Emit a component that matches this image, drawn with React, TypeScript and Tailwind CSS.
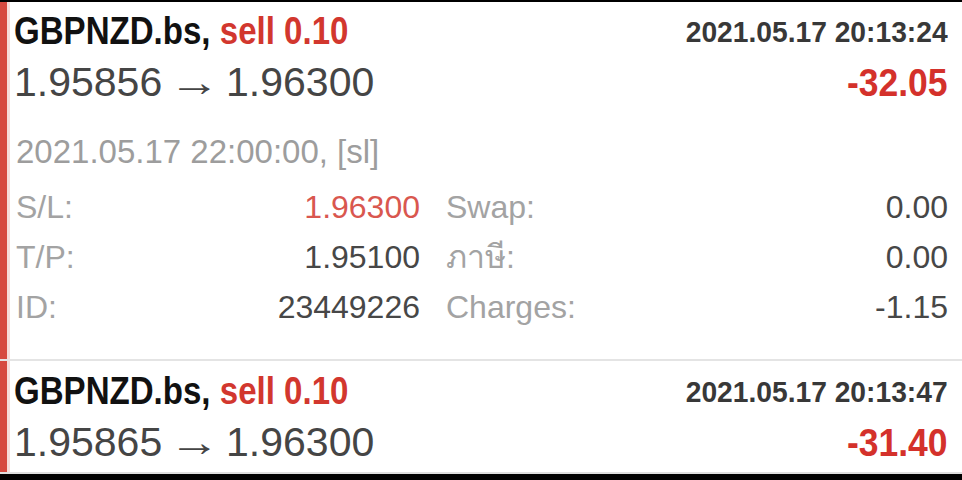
import React from 'react';

interface Deal {
  symbol: string;
  side: string;
  time: string;
  open: string;
  close: string;
  profit: string;
}

// no narrow font installed, so the condensed bold is Liberation Sans squeezed on x
const bold = "font-['Liberation_Sans','Arial',sans-serif] font-bold inline-block";
const regular = "font-['Liberation_Sans','Noto_Sans','DejaVu_Sans',sans-serif]";

function DealHeader({ deal }: { deal: Deal }) {
  return (
    <>
      {/* symbol + side, open time */}
      <div className="h-[52px] flex items-center justify-between">
        <div className={`${bold} text-[38px] scale-x-[0.87] origin-left whitespace-nowrap`}>
          <span className="text-[#111]">{deal.symbol}, </span>
          <span className="text-[#d2372e]">{deal.side}</span>
        </div>
        <div className={`${bold} text-[30px] scale-x-[0.94] origin-right text-[#383838] whitespace-nowrap`}>{deal.time}</div>
      </div>
      {/* prices + profit */}
      <div className="h-[52px] flex items-center justify-between">
        <div className={`${regular} text-[41px] text-[#454545] whitespace-nowrap`}>
          {deal.open} <span className="inline-block scale-x-[1.25]">→</span> {deal.close}
        </div>
        <div className={`${bold} text-[39px] scale-x-[0.91] origin-right text-[#d4312b]`}>{deal.profit}</div>
      </div>
    </>
  );
}

function DetailRow({ label, value, label2, value2, valueClass = 'text-[#474747]' }: {
  label: string;
  value: string;
  label2: string;
  value2: string;
  valueClass?: string;
}) {
  return (
    <div className={`${regular} h-[50px] flex items-center text-[32px]`}>
      <div className="w-[406px] flex justify-between pl-[2px]">
        <span className="text-[#a3a3a3]">{label}</span>
        <span className={valueClass}>{value}</span>
      </div>
      <div className="flex-1 ml-[26px] flex justify-between">
        <span className="text-[#a3a3a3]">{label2}</span>
        <span className="text-[#474747]">{value2}</span>
      </div>
    </div>
  );
}

export default function App() {
  const first: Deal = {
    symbol: 'GBPNZD.bs',
    side: 'sell 0.10',
    time: '2021.05.17 20:13:24',
    open: '1.95856',
    close: '1.96300',
    profit: '-32.05',
  };
  const second: Deal = {
    symbol: 'GBPNZD.bs',
    side: 'sell 0.10',
    time: '2021.05.17 20:13:47',
    open: '1.95865',
    close: '1.96300',
    profit: '-31.40',
  };

  return (
    <div className="w-[962px] h-[480px] bg-black overflow-hidden">
      <div className="mt-[2px] bg-white">
        {/* --- Expanded deal --- */}
        <div className="flex">
          <div className="w-[7px] bg-[#d6493f] shrink-0" />
          <div className="w-[3px] bg-[#f6dcd9] shrink-0" />
          <div className="flex-1 pl-[4px] pr-[14px] pt-[3px] pb-[27px]">
            <DealHeader deal={first} />
            <div className={`${regular} mt-[20px] h-[46px] flex items-center pl-[2px] text-[33px] text-[#9d9d9d]`}>
              2021.05.17 22:00:00, [sl]
            </div>
            <div className="mt-[7px]">
              <DetailRow label="S/L:" value="1.96300" label2="Swap:" value2="0.00" valueClass="text-[#d9574f]" />
              <DetailRow label="T/P:" value="1.95100" label2="ภาษี:" value2="0.00" />
              <DetailRow label="ID:" value="23449226" label2="Charges:" value2="-1.15" />
            </div>
          </div>
        </div>
        <div className="h-[2px] bg-[#e4e4e4]" />

        {/* --- Collapsed deal --- */}
        <div className="flex border-b-2 border-[#dedede]">
          <div className="w-[7px] bg-[#d6493f] shrink-0" />
          <div className="w-[3px] bg-[#f6dcd9] shrink-0" />
          <div className="flex-1 pl-[4px] pr-[14px] pt-[4px] pb-[3px]">
            <DealHeader deal={second} />
          </div>
        </div>
      </div>
    </div>
  );
}
